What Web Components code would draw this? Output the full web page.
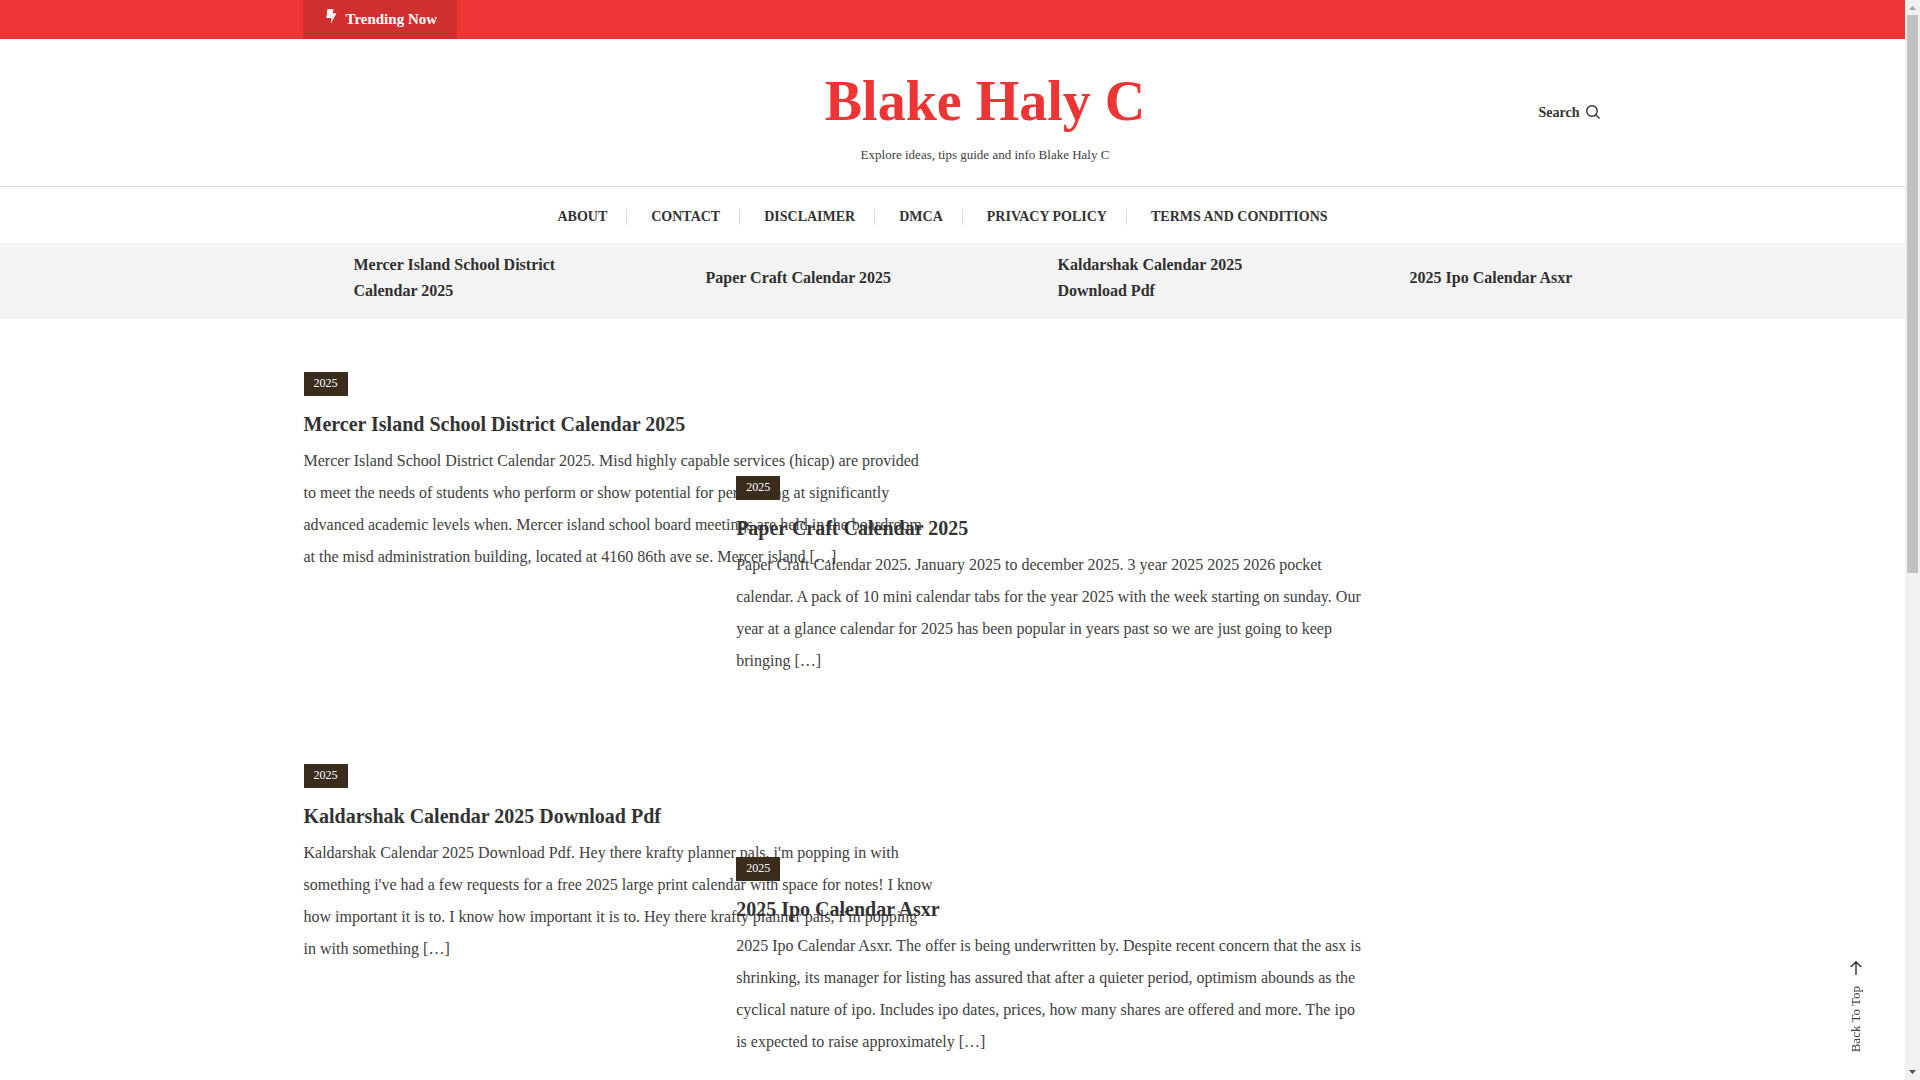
<!DOCTYPE html>
<html lang="en">
<head>
<meta charset="utf-8">
<title>Blake Haly C</title>
<style>
html, body { margin: 0; height: 100%; overflow: hidden; }
body { font-family: "Liberation Serif", serif; font-size: 16px; color: #404040; background: #fff; }
</style>
</head>
<body>
<blog-page></blog-page>
<script>
const base = `*{box-sizing:border-box}:host{display:block}a{color:inherit;text-decoration:none}h1,h2,h3,p,ul{margin:0;padding:0}ul{list-style:none}
button{font:inherit;color:inherit;background:none;border:0;padding:0;cursor:pointer}svg{display:block}
.wrap{width:calc(100% - 32px);max-width:1300px;margin:0 auto}`;
const define = (name, css, html) => customElements.define(name, class extends HTMLElement {
  constructor() {
    super();
    this.attachShadow({ mode: 'open' }).innerHTML = `<style>${base}${css}</style>${html}`;
  }
});

define('trending-bar', `
:host{background:#ed3535;color:#fff}
.label{display:inline-flex;align-items:flex-start;gap:9px;background:#d12f2f;height:39px;padding:9px 20px 0 23px;font-size:15px;line-height:20px;font-weight:700}
.wrap{display:flex}`,
`<div class="wrap"><div class="label">
<svg width="11" height="15" viewBox="0 0 11 15" fill="#fff"><path d="M1.5 0h6L6.6 4.2h3.9L4.8 14.5l.5-5.4H.4z"/></svg><span><slot></slot></span></div></div>`);

define('site-header', `
:host{border-bottom:1px solid #ddd}
.wrap{display:grid;grid-template-columns:75fr 60fr 65fr;align-items:center;padding:28px 0 21px}
.brand{grid-column:2;text-align:center}
h1{font-size:56px;line-height:68px;color:#ed3535;white-space:nowrap}
p{font-size:13px;line-height:20px;margin-top:10px}
button{justify-self:end;display:flex;align-items:flex-start;gap:6px;font-size:14px;line-height:20px;font-weight:700;color:#333;margin:0 3px 6px 0}
button svg{margin-top:2px}`,
`<div class="wrap"><div class="brand"><h1><a href="#"><slot name="title"></slot></a></h1><p><slot name="tagline"></slot></p></div>
<button type="button">Search
<svg width="14" height="14" viewBox="0 0 14 14" fill="none" stroke="#303030" stroke-width="1.4"><circle cx="6" cy="6" r="5.2"/><path d="M9.7 9.7L13.5 13.5"/></svg></button></div>`);

define('nav-link', `
:host{display:flex;align-items:center;font-size:14px;line-height:16px;font-weight:700;color:#333;text-transform:uppercase;border-right:1px solid #ddd;padding:0 19px 0 24px;height:16px}
:host(:last-child){border-right:0}`, `<a href="#"><slot></slot></a>`);

define('main-nav', `nav{display:flex;justify-content:center;height:56px;padding:22px 25px 0 0}`,
`<nav><slot></slot></nav>`);

define('headline-item', `:host{padding-left:51px}h3{font-size:16px;line-height:26px;max-width:250px;color:#303030}`,
`<h3><a href="#"><slot></slot></a></h3>`);

define('headline-strip', `
:host{background:#f3f3f3}
.wrap{display:grid;grid-template-columns:repeat(4,calc(25% - 9px));column-gap:36px;align-items:center;min-height:76px;padding:9px 0 15px}`,
`<div class="wrap"><slot></slot></div>`);

define('blog-post', `
:host{width:630px;position:relative}
.tag{display:block;width:fit-content;background:#3a2d1d;color:#fff;font-size:12px;line-height:22px;height:24px;padding:0 10px}
h2{font-size:20px;line-height:28px;color:#333;margin:14px 0 7px}
p{line-height:32px}`,
`<article><a class="tag" href="#">2025</a><h2><a href="#"><slot name="title"></slot></a></h2><p><slot></slot></p></article>`);

define('post-column', `
:host{display:flex;flex-direction:column;gap:191px;min-width:0}
:host([offset]){padding-top:104px;gap:180px}`, `<slot></slot>`);

define('post-grid', `.wrap{max-width:1298px;display:grid;grid-template-columns:repeat(3,minmax(0,1fr));padding-top:53px}`,
`<div class="wrap"><slot></slot></div>`);

define('back-to-top', `
:host{position:fixed;right:56px;bottom:28px}
button{display:flex;flex-direction:column;align-items:center;gap:11px;font-size:13px;line-height:16px;color:#404040}
span{writing-mode:vertical-rl;transform:rotate(180deg)}`,
`<button type="button"><svg width="12" height="14" viewBox="0 0 12 14" fill="none" stroke="#303030" stroke-width="1.4"><path d="M6 14V1M.7 6L6 .9 11.3 6"/></svg><span>Back To Top</span></button>`);

define('scroll-rail', `
:host{width:15px;flex:none;background:#f1f1f1;display:flex;flex-direction:column;align-items:center;padding:6px 0}
.thumb{width:11px;flex:0 0 558px;max-height:53%;background:#c1c1c1;margin:5px 0 auto}`,
`<svg width="7" height="4" viewBox="0 0 7 4" fill="#a3a3a3"><path d="M0 4L3.5 0 7 4z"/></svg><div class="thumb"></div>
<svg width="7" height="4" viewBox="0 0 7 4" fill="#505050"><path d="M0 0h7L3.5 4z"/></svg>`);

define('blog-page', `:host{display:flex;height:100vh}main{flex:1;min-width:0;overflow:hidden}`, `
<main>
<trending-bar>Trending Now</trending-bar>
<site-header><span slot="title">Blake Haly C</span><span slot="tagline">Explore ideas, tips guide and info Blake Haly C</span></site-header>
<main-nav><nav-link>About</nav-link><nav-link>Contact</nav-link><nav-link>Disclaimer</nav-link><nav-link>DMCA</nav-link><nav-link>Privacy Policy</nav-link><nav-link>Terms And Conditions</nav-link></main-nav>
<headline-strip><headline-item>Mercer Island School District Calendar 2025</headline-item><headline-item>Paper Craft Calendar 2025</headline-item><headline-item>Kaldarshak Calendar 2025 Download Pdf</headline-item><headline-item>2025 Ipo Calendar Asxr</headline-item></headline-strip>
<post-grid>
<post-column>
<blog-post><span slot="title">Mercer Island School District Calendar 2025</span>Mercer Island School District Calendar 2025. Misd highly capable services (hicap) are provided to meet the needs of students who perform or show potential for performing at significantly advanced academic levels when. Mercer island school board meetings are held in the boardroom at the misd administration building, located at 4160 86th ave se. Mercer island […]</blog-post>
<blog-post><span slot="title">Kaldarshak Calendar 2025 Download Pdf</span>Kaldarshak Calendar 2025 Download Pdf. Hey there krafty planner pals, i'm popping in with something i've had a few requests for a free 2025 large print calendar with space for notes! I know how important it is to. I know how important it is to. Hey there krafty planner pals, i’m popping in with something […]</blog-post>
</post-column>
<post-column offset>
<blog-post><span slot="title">Paper Craft Calendar 2025</span>Paper Craft Calendar 2025. January 2025 to december 2025. 3 year 2025 2025 2026 pocket calendar. A pack of 10 mini calendar tabs for the year 2025 with the week starting on sunday. Our year at a glance calendar for 2025 has been popular in years past so we are just going to keep bringing […]</blog-post>
<blog-post><span slot="title">2025 Ipo Calendar Asxr</span>2025 Ipo Calendar Asxr. The offer is being underwritten by. Despite recent concern that the asx is shrinking, its manager for listing has assured that after a quieter period, optimism abounds as the cyclical nature of ipo. Includes ipo dates, prices, how many shares are offered and more. The ipo is expected to raise approximately […]</blog-post>
</post-column>
</post-grid>
</main>
<back-to-top></back-to-top>
<scroll-rail></scroll-rail>`);
</script>
</body>
</html>
